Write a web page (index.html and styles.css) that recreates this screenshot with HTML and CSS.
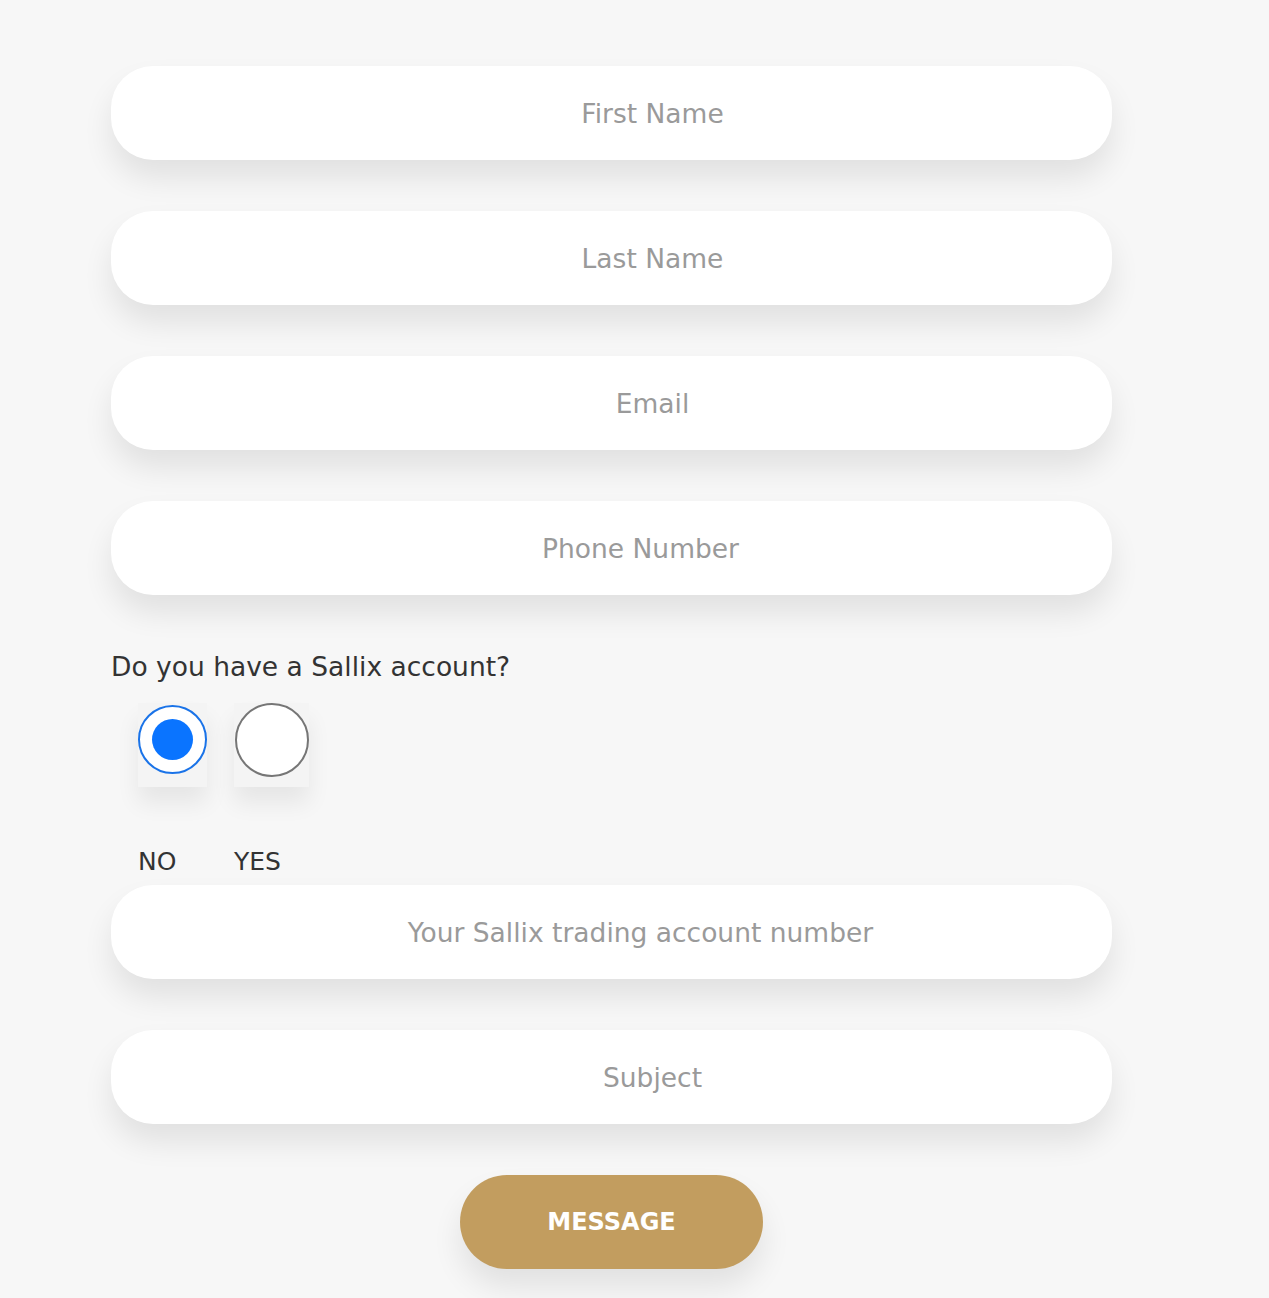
FILE: index.html
```html
<!DOCTYPE html>
<html lang="en">
<head>
<meta charset="utf-8">
<title>Contact form</title>
<link rel="stylesheet" href="styles.css">
</head>
<body>
<form class="form">
  <input class="field" type="text" placeholder="First Name">
  <input class="field" type="text" placeholder="Last Name">
  <input class="field" type="email" placeholder="Email">
  <input class="field field-alt" type="tel" placeholder="Phone Number">

  <div class="question">
    <p class="question-text">Do you have a Sallix account?</p>
    <div class="choices">
      <label class="choice choice-no">
        <span class="radio-box"><input class="radio" type="radio" name="account" value="no" checked></span>
        <span class="choice-label">NO</span>
      </label>
      <label class="choice choice-yes">
        <span class="radio-box"><input class="radio" type="radio" name="account" value="yes"></span>
        <span class="choice-label">YES</span>
      </label>
    </div>
  </div>

  <input class="field field-alt" type="text" placeholder="Your Sallix trading account number">
  <input class="field" type="text" placeholder="Subject">

  <div class="actions">
    <button class="submit" type="button">MESSAGE</button>
  </div>
</form>
</body>
</html>
```

FILE: styles.css
```css
* { box-sizing: border-box; }

html, body {
  margin: 0;
  padding: 0;
  background: #f7f7f7;
}

body {
  font-family: "DejaVu Sans", "Open Sans", sans-serif;
  color: #333;
}

.form {
  width: 1001px;
  margin: 66px 0 30px 111px;
  display: flex;
  flex-direction: column;
}

.field {
  display: block;
  width: 100%;
  height: 94px;
  margin: 0 0 51px 0;
  border: none;
  border-radius: 42px;
  background: #fff;
  padding: 0 0 0 82px;
  text-align: center;
  font-family: inherit;
  font-size: 26.5px;
  color: #333;
  box-shadow: 0 18px 30px rgba(0, 0, 0, 0.09);
  outline: none;
}

.field-alt { padding-left: 58px; }

.field::placeholder { color: #9a9a9a; opacity: 1; }

.question {
  margin-top: 4px;
}

.question-text {
  margin: 0;
  font-size: 26.5px;
  line-height: 34px;
  color: #333;
}

.choices {
  display: flex;
  gap: 27px;
  margin: 19px 0 0 27px;
}

.choice {
  display: flex;
  flex-direction: column;
  align-items: flex-start;
}

.radio-box {
  display: flex;
  align-items: flex-start;
  justify-content: center;
  height: 84px;
  background: #f4f4f4;
  box-shadow: 0 16px 22px rgba(0, 0, 0, 0.07);
}

.choice-no .radio-box { width: 69px; padding-top: 2px; }
.choice-yes .radio-box { width: 75px; }

.radio {
  appearance: none;
  -webkit-appearance: none;
  margin: 0;
  border-radius: 50%;
  background: #fff;
  position: relative;
}

.choice-no .radio {
  width: 69px;
  height: 69px;
  border: 2px solid #1a73e8;
}

.choice-no .radio::after {
  content: "";
  position: absolute;
  left: 12px;
  top: 12px;
  width: 41px;
  height: 41px;
  border-radius: 50%;
  background: #0a74ff;
}

.choice-yes .radio {
  width: 74px;
  height: 74px;
  border: 2px solid #767676;
}

.choice-label {
  margin-top: 58px;
  font-size: 25px;
  line-height: 34px;
  color: #333;
}

.question + .field { margin-top: 6px; }

.actions {
  display: flex;
  justify-content: center;
}

.submit {
  width: 303px;
  height: 94px;
  border: none;
  border-radius: 47px;
  background: #c29d5f;
  color: #fff;
  font-family: inherit;
  font-weight: 700;
  font-size: 24px;
  letter-spacing: 0;
  box-shadow: 0 18px 30px rgba(0, 0, 0, 0.09);
  cursor: pointer;
}
```
